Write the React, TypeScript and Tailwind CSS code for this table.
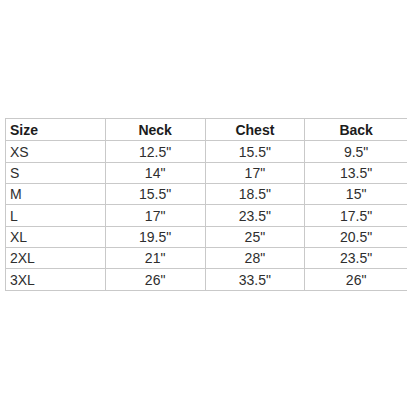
import React from "react";

const header = ["Size", "Neck", "Chest", "Back"];
const rows: string[][] = [
  ["XS", "12.5\"", "15.5\"", "9.5\""],
  ["S", "14\"", "17\"", "13.5\""],
  ["M", "15.5\"", "18.5\"", "15\""],
  ["L", "17\"", "23.5\"", "17.5\""],
  ["XL", "19.5\"", "25\"", "20.5\""],
  ["2XL", "21\"", "28\"", "23.5\""],
  ["3XL", "26\"", "33.5\"", "26\""],
];
const heights = ["h-[22px]", "h-[21px]", "h-[21px]", "h-[22px]", "h-[21px]", "h-[21px]", "h-[22px]"];

function Row({ cells, bold, h }: { cells: string[]; bold?: boolean; h: string }) {
  return (
    <div className={`flex ${h} border-b border-[#c9c9c9]`}>
      {cells.map((c, i) => (
        <div
          key={i}
          className={`flex items-center ${
            i === 3 ? "w-[102px]" : "w-[100px] border-r border-[#c9c9c9]"
          } ${i === 0 ? "justify-start pl-[4px]" : "justify-center"} ${
            bold ? "font-bold text-[#1c1c1c]" : "text-[#2e2e2e]"
          }`}
        >
          {c}
        </div>
      ))}
    </div>
  );
}

export default function App() {
  return (
    <div
      className="w-[407px] h-[407px] bg-white overflow-hidden pt-[118px] pl-[5px] text-[14px] leading-none"
      style={{ fontFamily: '"Liberation Sans", Arial, sans-serif' }}
    >
      <div className="w-[402px] border-t border-l border-[#c9c9c9]">
        <Row cells={header} bold h="h-[22px]" />
        {rows.map((r, i) => (
          <Row key={i} cells={r} h={heights[i]} />
        ))}
      </div>
    </div>
  );
}
